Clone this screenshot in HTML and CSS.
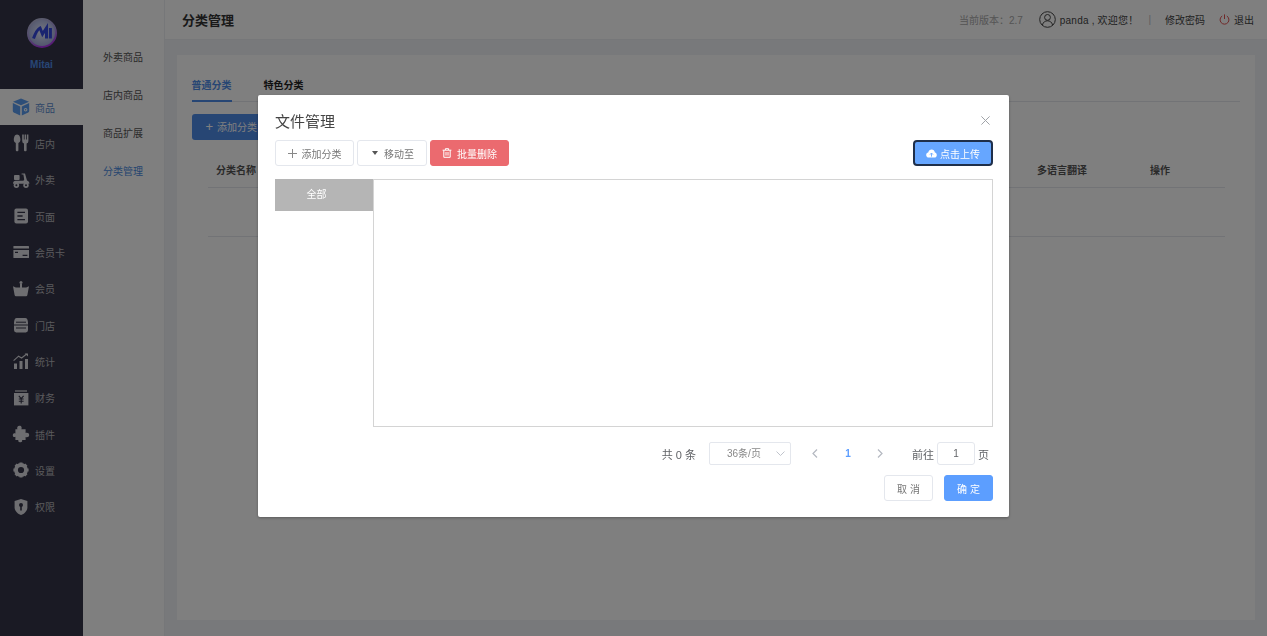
FILE: index.html
```html
<!DOCTYPE html>
<html lang="zh-CN">
<head>
    <meta charset="UTF-8">
    <title>分类管理</title>
    <link rel="stylesheet" href="styles.css">
</head>
<body>
<div class="page">
    <div class="sidebar">
        <div class="logo">
            <svg width="30" height="30" viewBox="0 0 30 30">
                <defs>
                    <linearGradient id="ring" x1="0.2" y1="0" x2="0.6" y2="1">
                        <stop offset="0" stop-color="#b8bcd8"/>
                        <stop offset="0.55" stop-color="#a898e0"/>
                        <stop offset="1" stop-color="#b030f0"/>
                    </linearGradient>
                    <radialGradient id="disc" cx="0.5" cy="0.45" r="0.6">
                        <stop offset="0" stop-color="#e8ecff"/>
                        <stop offset="1" stop-color="#9aa4d8"/>
                    </radialGradient>
                </defs>
                <circle cx="15" cy="15" r="14" fill="url(#disc)" stroke="url(#ring)" stroke-width="2"/>
                <path d="M6.5 20.5 C8.5 15 11 11 13 10 L15.5 16 L19.5 10 L19.5 20.5 M23.4 10 V20.5" fill="none" stroke="#3548e0" stroke-width="3"/>
            </svg>
            <div class="logo-name">Mitai</div>
        </div>
        <a class="side-item active">
            <svg class="side-icon" viewBox="0 0 18 18"><path d="M9 .6 L17 3.8 L9 7.2 L1 3.8Z" fill="#5a9cf0"/><path d="M.8 5 L8.2 8.4 V17.4 L1.8 14.6 Q.8 14 .8 13Z" fill="#5a9cf0"/><path d="M17.2 5 L9.8 8.4 V17.4 L16.2 14.6 Q17.2 14 17.2 13Z" fill="#5a9cf0"/><circle cx="13.6" cy="11.8" r="1.8" fill="#fff"/><circle cx="13.6" cy="11.8" r=".8" fill="#5a9cf0"/></svg>
            <span>商品</span>
        </a>
        <a class="side-item">
            <svg class="side-icon" viewBox="0 0 18 18"><path d="M5 .6 C7.6 .6 8.4 3.8 8.4 5.8 C8.4 7.6 7.2 8.6 6.4 9 V16.2 Q6.4 17.2 5.4 17.2 H4.8 Q3.8 17.2 3.8 16.2 V9 C3 8.6 1.8 7.6 1.8 5.8 C1.8 3.8 2.6 .6 5 .6Z" class="ic"/><path d="M10.2 .6 H11.8 V5.4 H12.6 V.6 H14 V5.4 H14.8 V.6 H16.4 V7 Q16.4 9 14.6 9.6 V16.2 Q14.6 17.2 13.6 17.2 H13 Q12 17.2 12 16.2 V9.6 Q10.2 9 10.2 7Z" class="ic"/></svg>
            <span>店内</span>
        </a>
        <a class="side-item">
            <svg class="side-icon" viewBox="0 0 18 18"><rect x="2" y="4" width="5.6" height="5" rx=".8" class="ic"/><path d="M9.6 2.4 H13 L15 9.6 C16.6 10 17.4 11.2 17.4 12.8 H1 C1 11 2 9.8 3.6 9.8 H10.6 Q12.2 9.8 12.2 8.4 L11.4 3.6 H9.6Z" class="ic"/><circle cx="4.4" cy="14.2" r="2.7" class="ic"/><circle cx="14" cy="14.2" r="2.7" class="ic"/><circle cx="4.4" cy="14.2" r="1" class="hole"/><circle cx="14" cy="14.2" r="1" class="hole"/></svg>
            <span>外卖</span>
        </a>
        <a class="side-item">
            <svg class="side-icon" viewBox="0 0 18 18"><rect x="2.4" y="1.4" width="13.6" height="15.2" rx="2" class="ic"/><path d="M5.4 5.4 H13 M5.4 9 H10.6 M5.4 12.6 H13" class="cut" stroke-width="1.4"/></svg>
            <span>页面</span>
        </a>
        <a class="side-item">
            <svg class="side-icon" viewBox="0 0 18 18"><path d="M2 3 H16.4 Q17 3 17 3.6 V5.6 H1.4 V3.6 Q1.4 3 2 3Z" class="ic"/><path d="M1.4 7 H17 V14.4 Q17 15 16.4 15 H2 Q1.4 15 1.4 14.4Z" class="ic"/><path d="M3 9.4 H6 M10.6 12.4 H15.4" class="cut" stroke-width="1.2"/></svg>
            <span>会员卡</span>
        </a>
        <a class="side-item">
            <svg class="side-icon" viewBox="0 0 18 18"><circle cx="9" cy="2.4" r="1.5" class="ic"/><path d="M8 4 H10 V7.6 H14.2 L17 6.2 L15.4 15 Q15.2 16.2 14 16.2 H4 Q2.8 16.2 2.6 15 L1 6.2 L3.8 7.6 H8Z" class="ic"/></svg>
            <span>会员</span>
        </a>
        <a class="side-item">
            <svg class="side-icon" viewBox="0 0 18 18"><path d="M4.6 2 H13.4 Q15.6 2 16 6.4 V8.4 H2 V6.4 Q2.4 2 4.6 2Z" class="ic"/><path d="M2 9.6 H16 V14 Q16 16.4 13.8 16.4 H4.2 Q2 16.4 2 14Z" class="ic"/><path d="M4 6.2 H14 M4 12 H14" class="cut" stroke-width="1"/></svg>
            <span>门店</span>
        </a>
        <a class="side-item">
            <svg class="side-icon" viewBox="0 0 18 18"><path d="M2 11.6 H5 V17 H2Z M7.5 9 H10.5 V17 H7.5Z M13 7 H16 V17 H13Z" class="ic"/><path d="M1.6 8.6 L6.6 4.2 L9.6 6 L14.6 2" fill="none" class="line" stroke-width="1.1"/><path d="M12.6 1.4 H16 V4.6Z" class="ic"/></svg>
            <span>统计</span>
        </a>
        <a class="side-item">
            <svg class="side-icon" viewBox="0 0 18 18"><path d="M3 1.4 H15 V2.6 H3Z" class="ic"/><path d="M2 4 H16.4 V16.4 H2Z" class="ic"/><path d="M6.8 6.8 L9.2 9.6 L11.6 6.8 M6.8 10 H11.6 M6.8 12.2 H11.6 M9.2 9.6 V14.4" fill="none" class="cut" stroke-width="1.1"/></svg>
            <span>财务</span>
        </a>
        <a class="side-item">
            <svg class="side-icon" viewBox="0 0 18 18"><path d="M7.4 .8 C9.8 .8 10 3 9.4 4.2 H13.6 V8 C15.2 7.2 17.2 8 17.2 10 C17.2 12 15.2 12.6 13.6 12 V15 H10 C10.8 16.4 9.6 17.6 8 17.2 C6.4 17 6 16 6.4 15 H3.4 V11.8 C1.8 12.6 .6 11.4 .8 10 C1 8.4 2.4 8 3.4 8.6 V4.2 H5.4 C4.6 2.6 5.8 .8 7.4 .8Z" class="ic"/></svg>
            <span>插件</span>
        </a>
        <a class="side-item">
            <svg class="side-icon" viewBox="0 0 18 18"><circle cx="9" cy="9" r="5" fill="none" class="line" stroke-width="3.8"/><path d="M9 1.4 V4 M9 14 V16.6 M1.4 9 H4 M14 9 H16.6 M3.6 3.6 L5.4 5.4 M12.6 12.6 L14.4 14.4 M3.6 14.4 L5.4 12.6 M12.6 5.4 L14.4 3.6" class="line" stroke-width="3"/></svg>
            <span>设置</span>
        </a>
        <a class="side-item">
            <svg class="side-icon" viewBox="0 0 18 18"><path d="M9 1 L15.4 3 V9.4 C15.4 13 12.4 15.8 9 17 C5.6 15.8 2.6 13 2.6 9.4 V3Z" class="ic"/><circle cx="9" cy="7" r="2" class="hole"/><path d="M9 8 V12.6" class="cut" stroke-width="1.6"/></svg>
            <span>权限</span>
        </a>
    </div>

    <div class="subnav">
        <a class="sub-item">外卖商品</a>
        <a class="sub-item">店内商品</a>
        <a class="sub-item">商品扩展</a>
        <a class="sub-item current">分类管理</a>
    </div>

    <div class="main">
        <div class="topbar">
            <div class="page-title">分类管理</div>
            <div class="top-right">
                <span class="version">当前版本：2.7</span>
                <span class="user">
                    <svg width="17" height="17" viewBox="0 0 17 17" fill="none" stroke="#444" stroke-width="1"><circle cx="8.5" cy="8.5" r="7.8"/><circle cx="8.5" cy="6.4" r="2.9"/><path d="M3.4 14 C4.2 11 6.2 9.8 8.5 9.8 C10.8 9.8 12.8 11 13.6 14"/></svg>
                    <span class="user-name">panda , 欢迎您！</span>
                </span>
                <span class="sep">|</span>
                <a class="top-link">修改密码</a>
                <a class="top-link logout">
                    <svg width="11" height="11" viewBox="0 0 11 11" fill="none" stroke="#e05050" stroke-width="1"><path d="M3.2 2 A4.4 4.4 0 1 0 7.8 2"/><path d="M5.5 .4 V5"/></svg>
                    退出
                </a>
            </div>
        </div>
        <div class="content">
            <div class="card">
                <div class="tabs">
                    <a class="tab on">普通分类</a>
                    <a class="tab">特色分类</a>
                </div>
                <a class="add-btn"><span class="plus">+</span>添加分类</a>
                <div class="table-head">
                    <span class="col-name">分类名称</span>
                    <span class="col-lang">多语言翻译</span>
                    <span class="col-op">操作</span>
                </div>
                <div class="table-row"></div>
            </div>
        </div>
    </div>
</div>

<div class="mask">
    <div class="dialog">
        <div class="dialog-head">
            <span class="dialog-title">文件管理</span>
            <svg class="close" width="9" height="9" viewBox="0 0 9 9" stroke="#a0a3a8" stroke-width="1"><path d="M.4 .4 L8.6 8.6 M8.6 .4 L.4 8.6"/></svg>
        </div>
        <div class="toolbar">
            <a class="btn btn-add">
                <svg width="9" height="9" viewBox="0 0 9 9" stroke="#888" stroke-width="1"><path d="M4.5 0 V9 M0 4.5 H9"/></svg>
                添加分类
            </a>
            <a class="btn btn-move"><i class="caret"></i>移动至</a>
            <a class="btn btn-danger">
                <svg width="10" height="10" viewBox="0 0 10 10" fill="none" stroke="#fff" stroke-width="1"><path d="M.6 2.2 H9.4 M3.4 2 V.7 H6.6 V2 M1.8 2.2 V9.3 H8.2 V2.2 M4 4 V7.6 M6 4 V7.6"/></svg>
                批量删除
            </a>
            <a class="btn btn-upload">
                <svg width="11" height="9" viewBox="0 0 11 9"><path d="M3 8.6 C1 8.6 .2 7.4 .2 6 C.2 4.8 1 3.8 2.2 3.6 C2.6 1.6 4 .4 5.6 .4 C7.4 .4 8.6 1.6 8.9 3.4 C10 3.6 10.8 4.6 10.8 6 C10.8 7.6 9.8 8.6 8.2 8.6Z" fill="#fff"/><path d="M5.5 7.6 V4.2 M4 5.6 L5.5 4 L7 5.6" fill="none" stroke="#66a6ff" stroke-width=".9"/></svg>
                点击上传
            </a>
        </div>
        <div class="file-panel">
            <div class="cat-list">
                <div class="cat-item">全部</div>
            </div>
            <div class="file-box"></div>
        </div>
        <div class="pager">
            <span class="total">共 0 条</span>
            <span class="size-select">36条/页
                <svg class="arrow" width="9" height="5" viewBox="0 0 9 5" fill="none" stroke="#c0c4cc" stroke-width="1"><path d="M.5 .5 L4.5 4.5 L8.5 .5"/></svg>
            </span>
            <svg class="page-arrow first" width="6" height="9" viewBox="0 0 6 9" fill="none" stroke="#b4b8c0" stroke-width="1.2"><path d="M5 .5 L1 4.5 L5 8.5"/></svg>
            <span class="page-num">1</span>
            <svg class="page-arrow" width="6" height="9" viewBox="0 0 6 9" fill="none" stroke="#b4b8c0" stroke-width="1.2"><path d="M1 .5 L5 4.5 L1 8.5"/></svg>
            <span class="jump">前往</span>
            <span class="jump-input">1</span>
            <span class="jump-end">页</span>
        </div>
        <div class="dialog-foot">
            <a class="btn foot-btn">取 消</a>
            <a class="btn foot-btn ok">确 定</a>
        </div>
    </div>
</div>
</body>
</html>
```
FILE: styles.css
```css
*{
    box-sizing: border-box;
}
html,body{
    margin: 0;
    height: 100%;
    overflow: hidden;
}
body{
    font-family: "Liberation Sans", "Noto Sans CJK SC", sans-serif;
    font-size: 10px;
    color: #606266;
}
a{
    text-decoration: none;
}
.page{
    display: flex;
    height: 636px;
    background: #f1f3f6;
}

/* left menu */
.sidebar{
    width: 83px;
    flex: none;
    background: #343448;
}
.logo{
    height: 89px;
    padding-top: 18px;
    display: flex;
    flex-direction: column;
    align-items: center;
}
.logo-name{
    margin-top: 11px;
    font-size: 10px;
    font-weight: bold;
    color: #4f8ce8;
}
.side-item{
    display: flex;
    align-items: center;
    height: 36.33px;
    padding-left: 12px;
    color: #b4b4ba;
}
.side-item span{
    margin-left: 5px;
    white-space: nowrap;
}
.side-icon{
    width: 18px;
    height: 18px;
    flex: none;
}
.ic{
    fill: #dcdce2;
}
.hole{
    fill: #343448;
}
.cut{
    stroke: #343448;
    fill: none;
}
.line{
    stroke: #dcdce2;
}
.side-item.active{
    background: #fff;
    color: #5a8cd0;
}

.subnav{
    width: 82px;
    flex: none;
    background: #fff;
    padding-top: 39px;
    border-right: 1px solid #eceef2;
}
.sub-item{
    display: block;
    height: 38px;
    line-height: 38px;
    padding-left: 20px;
    color: #555;
}
.sub-item.current{
    color: #4a8ae0;
}

.main{
    flex: 1;
    display: flex;
    flex-direction: column;
    min-width: 0;
}
.topbar{
    height: 40px;
    flex: none;
    background: #fff;
    border-bottom: 1px solid #eceef2;
    display: flex;
    align-items: center;
    justify-content: space-between;
    padding: 0 13px 0 17px;
}
.page-title{
    font-size: 13px;
    font-weight: bold;
    color: #333;
}
.top-right{
    display: flex;
    align-items: center;
}
.version{
    color: #aaa;
    margin-right: 16px;
}
.user{
    display: flex;
    align-items: center;
    gap: 4px;
    color: #444;
}
.user-name{
    letter-spacing: .2px;
}
.sep{
    color: #bbb;
    margin: 0 14px 0 10px;
}
.top-link{
    color: #444;
}
.logout{
    display: flex;
    align-items: center;
    gap: 4px;
    margin-left: 14px;
}
.content{
    flex: 1;
    padding: 15px 12px 16px;
}
.card{
    height: 100%;
    background: #fff;
    padding: 15px 15px 14px 14.5px;
}
.tabs{
    display: flex;
    gap: 32px;
    height: 32px;
    border-bottom: 1px solid #e4e7ed;
}
.tab{
    height: 32px;
    line-height: 31px;
    color: #222;
    font-weight: bold;
}
.tab.on{
    color: #4f8ce8;
    border-bottom: 2px solid #4f8ce8;
}
.add-btn{
    display: inline-block;
    margin-top: 12px;
    width: 90px;
    height: 26px;
    line-height: 26px;
    padding-left: 14px;
    background: #4f8ce8;
    color: #fff;
    border-radius: 3px;
}
.plus{
    margin-right: 4px;
    font-size: 13px;
}
.table-head{
    display: flex;
    height: 35px;
    line-height: 36px;
    margin: 13px 15px 0 16.5px;
    padding-left: 8px;
    border-bottom: 1px solid #e4e7ed;
    font-weight: bold;
    color: #555;
}
.col-lang{
    margin-left: 781px;
}
.col-op{
    margin-left: 63px;
}
.table-row{
    height: 49px;
    margin: 0 15px 0 16.5px;
    border-bottom: 1px solid #e4e7ed;
}

/* dialog */
.mask{
    position: fixed;
    top: 0;
    left: 0;
    right: 0;
    bottom: 0;
    background: rgba(0, 0, 0, 0.5);
    display: flex;
    justify-content: center;
    align-items: flex-start;
    padding-top: 95px;
}
.dialog{
    width: 751px;
    height: 422px;
    background: #fff;
    border-radius: 2px;
    box-shadow: 0 1px 3px rgba(0, 0, 0, 0.3);
    padding: 0 16px 0 17px;
}
.dialog-head{
    display: flex;
    justify-content: space-between;
    align-items: center;
    height: 45px;
    padding-top: 8px;
    padding-bottom: 2px;
}
.dialog-title{
    font-size: 15px;
    color: #444;
}
.close{
    margin-right: 3px;
}
.toolbar{
    display: flex;
    gap: 3px;
}
.btn{
    display: flex;
    align-items: center;
    justify-content: center;
    height: 26px;
    border: 1px solid #e4e7ed;
    border-radius: 3px;
    background: #fff;
    color: #777;
}
.btn-add{
    width: 79px;
    gap: 5px;
}
.btn-move{
    width: 70px;
    padding-left: 2px;
}
.caret{
    width: 0;
    height: 0;
    margin-right: 6px;
    border: 3px solid transparent;
    border-top: 4px solid #555;
    border-bottom: 0;
}
.btn-danger{
    width: 79px;
    gap: 5px;
    background: #eb6a6f;
    border-color: #eb6a6f;
    color: #fff;
}
.btn-upload{
    width: 80px;
    margin-left: auto;
    gap: 3px;
    background: #66a6ff;
    border: 2px solid #1f2f4a;
    border-radius: 4px;
    color: #fff;
}
.file-panel{
    display: flex;
    height: 248px;
    margin-top: 13px;
}
.cat-list{
    width: 98px;
    flex: none;
}
.cat-item{
    height: 32px;
    line-height: 31px;
    text-align: center;
    padding-right: 15px;
    background: #b5b5b5;
    color: #fff;
}
.file-box{
    flex: 1;
    border: 1px solid #d4d4d4;
}
.pager{
    display: flex;
    align-items: center;
    justify-content: flex-end;
    height: 23px;
    margin-top: 15px;
    padding-right: 4px;
}
.total{
    font-size: 11px;
    margin-right: 13px;
}
.size-select{
    position: relative;
    width: 82px;
    height: 23px;
    line-height: 21px;
    padding-left: 17px;
    border: 1px solid #e4e7ed;
    border-radius: 2px;
    color: #888;
}
.arrow{
    position: absolute;
    right: 5px;
    top: 8px;
}
.page-arrow.first{
    margin-left: 21px;
}
.page-num{
    width: 12px;
    margin: 0 23px 0 24px;
    text-align: center;
    font-weight: bold;
    color: #5c9eff;
}
.jump{
    margin-left: 29px;
    font-size: 11px;
}
.jump-input{
    width: 38px;
    height: 23px;
    line-height: 21px;
    margin-left: 3px;
    text-align: center;
    border: 1px solid #e4e7ed;
    border-radius: 3px;
}
.jump-end{
    margin-left: 3px;
    font-size: 11px;
}
.dialog-foot{
    display: flex;
    justify-content: flex-end;
    gap: 11px;
    margin-top: 10px;
}
.foot-btn{
    width: 49px;
}
.foot-btn.ok{
    background: #5c9eff;
    border-color: #5c9eff;
    color: #fff;
}
```
